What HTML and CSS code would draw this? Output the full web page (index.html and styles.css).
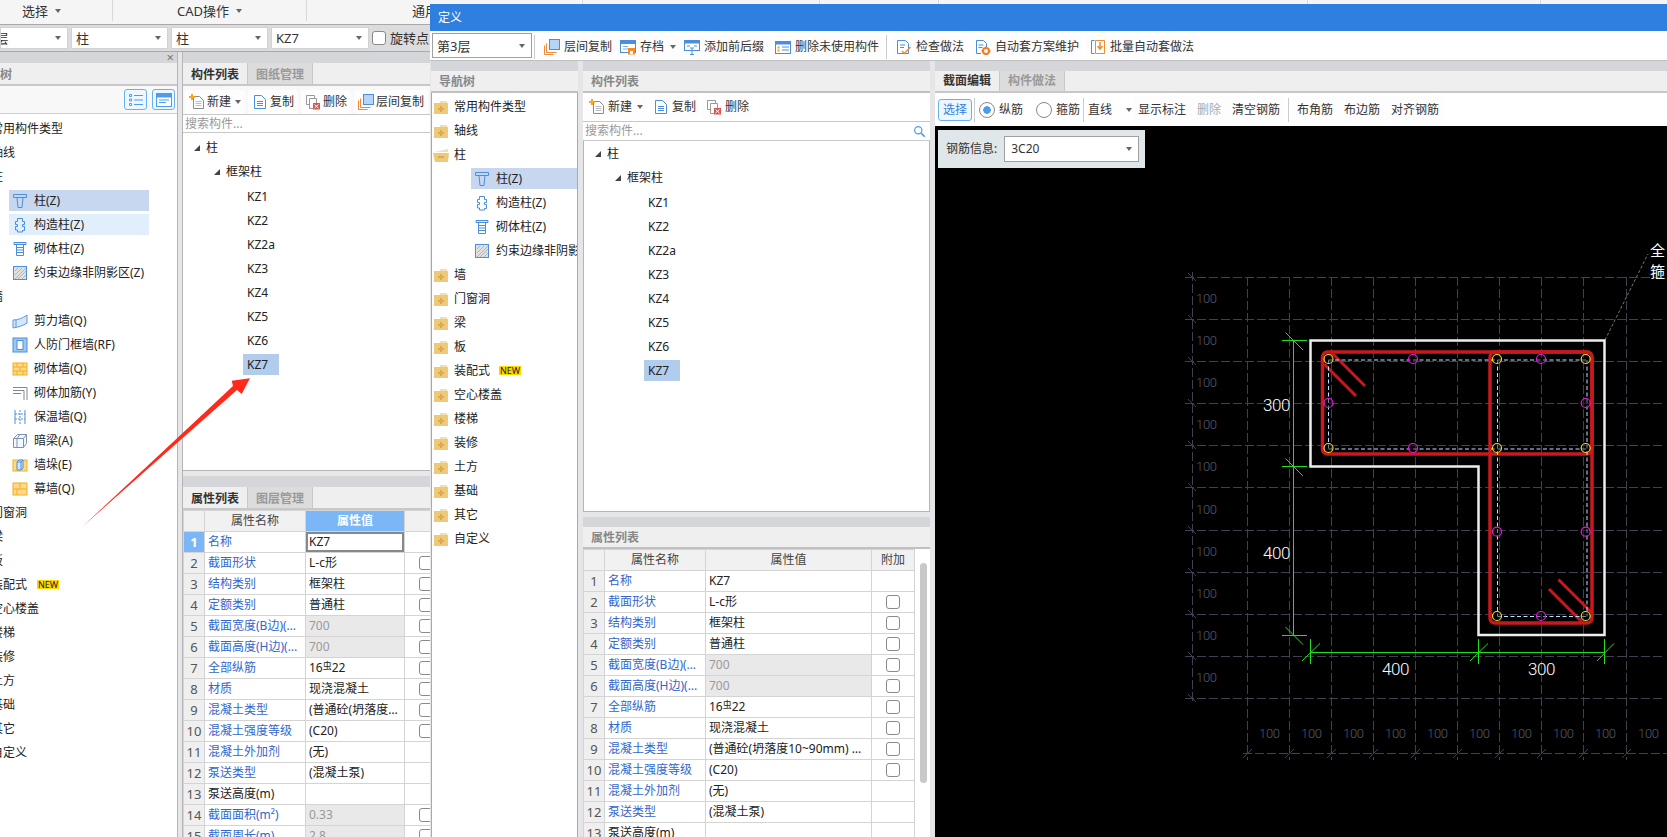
FILE: index.html
```html
<!DOCTYPE html>
<html lang="zh-CN">
<head>
    <meta charset="UTF-8">
    <title>定义</title>
    <link rel="stylesheet" href="styles.css">
</head>
<body>
    <svg class="sprite" xmlns="http://www.w3.org/2000/svg">
        <symbol id="i-folder" viewBox="0 0 16 16">
            <path d="M7 2h7v2H7z" fill="#f6dfae"/>
            <path d="M1 4h14v11H1z" fill="#efc97a"/>
            <path d="M7 7h2v2h2v2H9v2H7v-2H5V9h2z" fill="#dca94e"/>
        </symbol>
        <symbol id="i-folder-open" viewBox="0 0 16 16">
            <path d="M1 5l5-1 9-2v3H6z" fill="#f6dfae"/>
            <path d="M0 6h16l-1 9H2z" fill="#efc97a"/>
            <path d="M5 9h6v2H5z" fill="#dca94e"/>
        </symbol>
        <symbol id="i-col" viewBox="0 0 16 16">
            <path d="M1.500 1.500h13v3h-13zM5 4.500l1 10h4l1-10" fill="none" stroke="#4a8fdc"/>
        </symbol>
        <symbol id="i-gz" viewBox="0 0 16 16">
            <path d="M5.500 1.500h5v3h2v3h-2v2h2v4h-2v1.500h-5V13h-2V9.500h2v-2h-2v-3h2z" fill="none" stroke="#4a8fdc"/>
        </symbol>
        <symbol id="i-qz" viewBox="0 0 16 16">
            <path d="M2 1.500h12v2H2z" fill="#d4e6fa" stroke="#4a8fdc"/>
            <path d="M4.500 3.500h7v11h-7zM4.500 6.500h7M4.500 9h7M4.500 11.500h7" fill="none" stroke="#4a8fdc"/>
        </symbol>
        <symbol id="i-hatch" viewBox="0 0 16 16">
            <rect x="1.500" y="1.500" width="13" height="13" fill="#e0e0e0" stroke="#4a8fdc"/>
            <path d="M3 6l3-3M3 10l7-7M3 14L14 3M6 14l8-8M10 14l4-4" stroke="#b5b5b5"/>
        </symbol>
        <symbol id="i-shear" viewBox="0 0 16 16">
            <path d="M1 7c5 0 10-2 14-5v8c-4 3-9 4-14 5z" fill="#d4e6fa" stroke="#5b9be0"/>
            <path d="M4 7v8" stroke="#5b9be0"/>
        </symbol>
        <symbol id="i-rf" viewBox="0 0 16 16">
            <rect x="1" y="1" width="14" height="14" fill="#9fc7f2" stroke="#4a8fdc"/>
            <rect x="5" y="3.500" width="6" height="9" fill="#fff" stroke="#4a8fdc"/>
        </symbol>
        <symbol id="i-brick" viewBox="0 0 16 16">
            <rect x="1" y="2" width="14" height="12" fill="#ffd98a" stroke="#f3ae1d"/>
            <path d="M1 6h14M1 10h14M5 2v4M11 2v4M8 6v4M5 10v4M11 10v4" stroke="#f3ae1d"/>
        </symbol>
        <symbol id="i-rebar" viewBox="0 0 16 16">
            <path d="M1 2.500h14V15M1 5.500h11V15M1 8.500h8" fill="none" stroke="#7f8a96"/>
        </symbol>
        <symbol id="i-warm" viewBox="0 0 16 16">
            <path d="M3 1v14M13 1v14" stroke="#4a8fdc"/>
            <path d="M8 1v14M3 5h10M3 10h10" stroke="#4a8fdc" stroke-dasharray="2 1"/>
        </symbol>
        <symbol id="i-beam" viewBox="0 0 16 16">
            <path d="M1.500 5.500l4-4h9v9l-3 4h-10zM1.500 5.500h10v9M11.500 5.500l3-4M5 5.500v9M8 1.500L5 5.500" fill="#f4f8fd" stroke="#7d93ad"/>
        </symbol>
        <symbol id="i-pier" viewBox="0 0 16 16">
            <rect x="1" y="3" width="14" height="11" fill="#ffd98a" stroke="#f3ae1d"/>
            <path d="M5 5l2-2h4v8l-2 2H5zM5 5h4v8M9 5l2-2" fill="#d4e6fa" stroke="#4a8fdc"/>
        </symbol>
        <symbol id="i-curtain" viewBox="0 0 16 16">
            <rect x="1" y="2" width="14" height="12" fill="#ffd98a" stroke="#f3ae1d"/>
            <path d="M1 8h14M8 2v6M5 8v6" stroke="#f3ae1d"/>
        </symbol>
        <symbol id="i-new" viewBox="0 0 16 16">
            <path d="M4.500 2.500h6l4 4v8h-10z" fill="#fff" stroke="#8b8b8b"/>
            <path d="M6.500 7.500h6M6.500 9.500h6M6.500 11.500h6" stroke="#bbb"/>
            <path d="M0 2h2V0h2v2h2v2H4v2H2V4H0z" fill="#f5a623"/>
        </symbol>
        <symbol id="i-copy" viewBox="0 0 16 16">
            <path d="M2.500 1.500h7l4 4v9h-11z" fill="#fff" stroke="#4a8fdc"/>
            <path d="M5 7.500h6M5 9.500h6M5 11.500h6" stroke="#4a8fdc"/>
        </symbol>
        <symbol id="i-del" viewBox="0 0 16 16">
            <path d="M1.500 1.500h8v9h-8z" fill="#fff" stroke="#999"/>
            <path d="M4.500 4.500h7v10h-7z" fill="#fff" stroke="#999"/>
            <rect x="8" y="9" width="7" height="6.500" fill="#e0524a"/>
            <path d="M9.500 10.500l4 3.500M13.500 10.500l-4 3.500" stroke="#fff"/>
        </symbol>
        <symbol id="i-floor" viewBox="0 0 16 16">
            <path d="M.5 15.500V6.500M.5 15.500h9M2.500 13.500V4.500M2.500 13.500h10" fill="none" stroke="#ee8a3a"/>
            <rect x="5.500" y=".5" width="10" height="10" fill="#b7d5f7" stroke="#4a8fdc"/>
        </symbol>
        <symbol id="i-save" viewBox="0 0 16 16">
            <rect x=".5" y="1.500" width="15" height="12" fill="#fff" stroke="#4a8fdc"/>
            <path d="M1 2h14v3H1z" fill="#4a8fdc"/>
            <path d="M3 7.500h5M3 10h5" stroke="#7fb0e8"/>
            <rect x="8" y="9" width="7" height="6.500" fill="#ef8c2e"/>
            <rect x="10" y="12" width="3" height="3" fill="#fff"/>
        </symbol>
        <symbol id="i-prefix" viewBox="0 0 16 16">
            <rect x=".5" y="1.500" width="15" height="10" fill="#fff" stroke="#4a8fdc"/>
            <path d="M1 2h14v2.500H1z" fill="#4a8fdc"/>
            <path d="M3 7h3M10 7h3" stroke="#4a8fdc"/>
            <path d="M6 9h4M8 9v6M6 15.500h4" stroke="#4a8fdc"/>
        </symbol>
        <symbol id="i-unused" viewBox="0 0 16 16">
            <rect x=".5" y="2.500" width="15" height="12" fill="#fff" stroke="#4a8fdc"/>
            <path d="M1 3h14v2.500H1z" fill="#4a8fdc"/>
            <path d="M7 8h7M7 11h7" stroke="#4a8fdc"/>
            <path d="M2.500 7.500h2v2h-2zM2.500 10.500h2v2h-2z" fill="#f0a030"/>
        </symbol>
        <symbol id="i-check" viewBox="0 0 16 16">
            <path d="M1.500 1.500h8l3 3v10h-11z" fill="#fff" stroke="#4a8fdc"/>
            <path d="M4 6h5M4 8.500h4" stroke="#4a8fdc"/>
            <path d="M6 12l2.500 2.500L14.500 8" fill="none" stroke="#ef8c2e" stroke-width="1.500"/>
        </symbol>
        <symbol id="i-auto" viewBox="0 0 16 16">
            <path d="M1.500 1.500h7l3 3v5M6 14.500H1.500v-13" fill="#fff" stroke="#4a8fdc"/>
            <path d="M3.500 6h5M3.500 8.500h4" stroke="#4a8fdc"/>
            <circle cx="11" cy="12" r="3" fill="none" stroke="#ef7d22" stroke-width="2"/>
            <path d="M11 7.500v2M11 14.500v1.500M6.500 12h2M13.500 12h2" stroke="#ef7d22" stroke-width="1.500"/>
        </symbol>
        <symbol id="i-batch" viewBox="0 0 16 16">
            <path d="M4.500 1.500h-3v13h3" fill="none" stroke="#4a8fdc"/>
            <path d="M5.500 1.500h9v13h-9z" fill="#fff" stroke="#ef8c2e"/>
            <path d="M10 3v6M7.500 7l2.500 3 2.500-3" fill="none" stroke="#ef8c2e" stroke-width="1.500"/>
        </symbol>
        <symbol id="i-list" viewBox="0 0 16 16">
            <path d="M1.500 2.500h2v2h-2zM1.500 7h2v2h-2zM1.500 11.500h2v2h-2z" fill="#fff" stroke="#4a9cf0"/>
            <path d="M6 3.500h9M6 8h9M6 12.500h9" stroke="#4a9cf0"/>
        </symbol>
        <symbol id="i-card" viewBox="0 0 16 16">
            <rect x=".5" y="1.500" width="15" height="13" fill="#fff" stroke="#4a9cf0"/>
            <path d="M1 2h14v3.500H1z" fill="#4a9cf0"/>
            <path d="M3 8h10M3 10.500h7" stroke="#4a9cf0"/>
        </symbol>
        <symbol id="i-search" viewBox="0 0 16 16">
            <circle cx="6.500" cy="6.500" r="4.500" fill="none" stroke="#4a9cf0" stroke-width="1.500"/>
            <path d="M10 10l4.500 4.500" stroke="#4a9cf0" stroke-width="2"/>
        </symbol>
    </svg>

    <div class="app">
        <div class="ribbon">
            <div class="ribbon-group first">选择<i class="caret"></i></div>
            <div class="ribbon-group w194">CAD操作<i class="caret"></i></div>
            <div class="ribbon-group w276">通用操作<i class="caret"></i></div>
            <div class="ribbon-group w237"></div>
            <div class="ribbon-group w119"></div>
            <div class="ribbon-group w369"></div>
            <div class="ribbon-group w233"></div>
        </div>
        <div class="filterbar">
            <div class="combo first"><span class="cut">第3层</span><i class="caret"></i></div>
            <div class="combo"><span>柱</span><i class="caret"></i></div>
            <div class="combo"><span>柱</span><i class="caret"></i></div>
            <div class="combo wide"><span>KZ7</span><i class="caret"></i></div>
            <span class="chk"></span>
            <span>旋转点角度</span>
        </div>

        <div class="app-main">
            <div class="nav-pane">
                <div class="strip close-strip"><span class="close">×</span></div>
                <div class="pane-head"><span class="cut-title">导航树</span></div>
                <div class="view-bar">
                    <span class="view-btn"><svg class="ic"><use href="#i-list"/></svg></span>
                    <span class="view-btn"><svg class="ic"><use href="#i-card"/></svg></span>
                </div>
                <div class="nav-tree">
                    <div class="node top">常用构件类型</div>
                    <div class="node top">轴线</div>
                    <div class="node top">柱</div>
                    <div class="node sub sel"><svg class="ic"><use href="#i-col"/></svg>柱(Z)</div>
                    <div class="node sub hover"><svg class="ic"><use href="#i-gz"/></svg>构造柱(Z)</div>
                    <div class="node sub"><svg class="ic"><use href="#i-qz"/></svg>砌体柱(Z)</div>
                    <div class="node sub"><svg class="ic"><use href="#i-hatch"/></svg>约束边缘非阴影区(Z)</div>
                    <div class="node top">墙</div>
                    <div class="node sub"><svg class="ic"><use href="#i-shear"/></svg>剪力墙(Q)</div>
                    <div class="node sub"><svg class="ic"><use href="#i-rf"/></svg>人防门框墙(RF)</div>
                    <div class="node sub"><svg class="ic"><use href="#i-brick"/></svg>砌体墙(Q)</div>
                    <div class="node sub"><svg class="ic"><use href="#i-rebar"/></svg>砌体加筋(Y)</div>
                    <div class="node sub"><svg class="ic"><use href="#i-warm"/></svg>保温墙(Q)</div>
                    <div class="node sub"><svg class="ic"><use href="#i-beam"/></svg>暗梁(A)</div>
                    <div class="node sub"><svg class="ic"><use href="#i-pier"/></svg>墙垛(E)</div>
                    <div class="node sub"><svg class="ic"><use href="#i-curtain"/></svg>幕墙(Q)</div>
                    <div class="node top">门窗洞</div>
                    <div class="node top">梁</div>
                    <div class="node top">板</div>
                    <div class="node top">装配式<b class="new">NEW</b></div>
                    <div class="node top">空心楼盖</div>
                    <div class="node top">楼梯</div>
                    <div class="node top">装修</div>
                    <div class="node top">土方</div>
                    <div class="node top">基础</div>
                    <div class="node top">其它</div>
                    <div class="node top">自定义</div>
                </div>
            </div>

            <div class="list-pane">
                <div class="strip"></div>
                <div class="tabs">
                    <span class="tab on">构件列表</span>
                    <span class="tab">图纸管理</span>
                </div>
                <div class="toolbar tight">
                    <span class="tbtn"><svg class="ic"><use href="#i-new"/></svg>新建<i class="caret"></i></span>
                    <span class="tbtn"><svg class="ic"><use href="#i-copy"/></svg>复制</span>
                    <span class="tbtn"><svg class="ic"><use href="#i-del"/></svg>删除</span>
                    <span class="tbtn"><svg class="ic"><use href="#i-floor"/></svg>层间复制</span>
                </div>
                <div class="search">搜索构件...</div>
                <div class="list-tree">
                    <div class="lnode l1"><i class="fold"></i>柱</div>
                    <div class="lnode l2"><i class="fold"></i>框架柱</div>
                    <div class="lnode l3"><span>KZ1</span></div>
                    <div class="lnode l3"><span>KZ2</span></div>
                    <div class="lnode l3"><span>KZ2a</span></div>
                    <div class="lnode l3"><span>KZ3</span></div>
                    <div class="lnode l3"><span>KZ4</span></div>
                    <div class="lnode l3"><span>KZ5</span></div>
                    <div class="lnode l3"><span>KZ6</span></div>
                    <div class="lnode l3"><span class="picked">KZ7</span></div>
                </div>
                <div class="pane-gap"></div>
                <div class="strip"></div>
                <div class="tabs">
                    <span class="tab on">属性列表</span>
                    <span class="tab">图层管理</span>
                </div>
                <table class="props back">
                    <colgroup><col class="c-no"><col class="c-name"><col class="c-val"><col class="c-add"></colgroup>
                    <tr><th></th><th>属性名称</th><th class="active">属性值</th><th>附加</th></tr>
                    <tr><td class="no cur">1</td><td class="nm">名称</td><td class="edit">KZ7</td><td></td></tr>
                    <tr><td class="no">2</td><td class="nm">截面形状</td><td>L-c形</td><td class="add"><span class="chk"></span></td></tr>
                    <tr><td class="no">3</td><td class="nm">结构类别</td><td>框架柱</td><td class="add"><span class="chk"></span></td></tr>
                    <tr><td class="no">4</td><td class="nm">定额类别</td><td>普通柱</td><td class="add"><span class="chk"></span></td></tr>
                    <tr><td class="no">5</td><td class="nm">截面宽度(B边)(mm)</td><td class="off">700</td><td class="add"><span class="chk"></span></td></tr>
                    <tr><td class="no">6</td><td class="nm">截面高度(H边)(mm)</td><td class="off">700</td><td class="add"><span class="chk"></span></td></tr>
                    <tr><td class="no">7</td><td class="nm">全部纵筋</td><td>16<span class="steel">虫</span>22</td><td class="add"><span class="chk"></span></td></tr>
                    <tr><td class="no">8</td><td class="nm">材质</td><td>现浇混凝土</td><td class="add"><span class="chk"></span></td></tr>
                    <tr><td class="no">9</td><td class="nm">混凝土类型</td><td>(普通砼(坍落度10~90mm)</td><td class="add"><span class="chk"></span></td></tr>
                    <tr><td class="no">10</td><td class="nm">混凝土强度等级</td><td>(C20)</td><td class="add"><span class="chk"></span></td></tr>
                    <tr><td class="no">11</td><td class="nm">混凝土外加剂</td><td>(无)</td><td></td></tr>
                    <tr><td class="no">12</td><td class="nm">泵送类型</td><td>(混凝土泵)</td><td></td></tr>
                    <tr><td class="no">13</td><td class="plain">泵送高度(m)</td><td></td><td></td></tr>
                    <tr><td class="no">14</td><td class="nm">截面面积(m²)</td><td class="off">0.33</td><td class="add"><span class="chk"></span></td></tr>
                    <tr><td class="no">15</td><td class="nm">截面周长(m)</td><td class="off">2.8</td><td class="add"><span class="chk"></span></td></tr>
                </table>
            </div>
        </div>

        <svg class="pointer" width="180" height="160" viewBox="75 375 180 160" xmlns="http://www.w3.org/2000/svg">
            <polygon points="82,527 233,386 231.700,380.700 250,378.300 241.700,394 237,390" fill="#ff2a1a"/>
        </svg>
    </div>

    <div class="dialog">
        <div class="dlg-title">定义</div>
        <div class="dlg-tool">
            <div class="combo floor"><span>第3层</span><i class="caret"></i></div>
            <i class="sep"></i>
            <span class="tbtn nogap"><svg class="ic"><use href="#i-floor"/></svg>层间复制</span>
            <span class="tbtn nogap"><svg class="ic"><use href="#i-save"/></svg>存档<i class="caret"></i></span>
            <span class="tbtn"><svg class="ic"><use href="#i-prefix"/></svg>添加前后缀</span>
            <span class="tbtn"><svg class="ic"><use href="#i-unused"/></svg>删除未使用构件</span>
            <i class="sep"></i>
            <span class="tbtn"><svg class="ic"><use href="#i-check"/></svg>检查做法</span>
            <span class="tbtn"><svg class="ic"><use href="#i-auto"/></svg>自动套方案维护</span>
            <span class="tbtn"><svg class="ic"><use href="#i-batch"/></svg>批量自动套做法</span>
        </div>

        <div class="dlg-body">
            <div class="dcol nav-col">
                <div class="strip"></div>
                <div class="col-head">导航树</div>
                <div class="dlg-tree">
                    <div class="node"><svg class="ic"><use href="#i-folder"/></svg>常用构件类型</div>
                    <div class="node"><svg class="ic"><use href="#i-folder"/></svg>轴线</div>
                    <div class="node"><svg class="ic"><use href="#i-folder-open"/></svg>柱</div>
                    <div class="node sub sel"><svg class="ic"><use href="#i-col"/></svg>柱(Z)</div>
                    <div class="node sub"><svg class="ic"><use href="#i-gz"/></svg>构造柱(Z)</div>
                    <div class="node sub"><svg class="ic"><use href="#i-qz"/></svg>砌体柱(Z)</div>
                    <div class="node sub"><svg class="ic"><use href="#i-hatch"/></svg>约束边缘非阴影区(Z)</div>
                    <div class="node"><svg class="ic"><use href="#i-folder"/></svg>墙</div>
                    <div class="node"><svg class="ic"><use href="#i-folder"/></svg>门窗洞</div>
                    <div class="node"><svg class="ic"><use href="#i-folder"/></svg>梁</div>
                    <div class="node"><svg class="ic"><use href="#i-folder"/></svg>板</div>
                    <div class="node"><svg class="ic"><use href="#i-folder"/></svg>装配式<b class="new">NEW</b></div>
                    <div class="node"><svg class="ic"><use href="#i-folder"/></svg>空心楼盖</div>
                    <div class="node"><svg class="ic"><use href="#i-folder"/></svg>楼梯</div>
                    <div class="node"><svg class="ic"><use href="#i-folder"/></svg>装修</div>
                    <div class="node"><svg class="ic"><use href="#i-folder"/></svg>土方</div>
                    <div class="node"><svg class="ic"><use href="#i-folder"/></svg>基础</div>
                    <div class="node"><svg class="ic"><use href="#i-folder"/></svg>其它</div>
                    <div class="node"><svg class="ic"><use href="#i-folder"/></svg>自定义</div>
                </div>
            </div>

            <div class="dcol mid-col">
                <div class="strip"></div>
                <div class="col-head">构件列表</div>
                <div class="toolbar">
                    <span class="tbtn"><svg class="ic"><use href="#i-new"/></svg>新建<i class="caret"></i></span>
                    <span class="tbtn"><svg class="ic"><use href="#i-copy"/></svg>复制</span>
                    <span class="tbtn"><svg class="ic"><use href="#i-del"/></svg>删除</span>
                </div>
                <div class="search">搜索构件...<svg class="ic glass"><use href="#i-search"/></svg></div>
                <div class="list-tree tall">
                    <div class="lnode l1"><i class="fold"></i>柱</div>
                    <div class="lnode l2"><i class="fold"></i>框架柱</div>
                    <div class="lnode l3"><span>KZ1</span></div>
                    <div class="lnode l3"><span>KZ2</span></div>
                    <div class="lnode l3"><span>KZ2a</span></div>
                    <div class="lnode l3"><span>KZ3</span></div>
                    <div class="lnode l3"><span>KZ4</span></div>
                    <div class="lnode l3"><span>KZ5</span></div>
                    <div class="lnode l3"><span>KZ6</span></div>
                    <div class="lnode l3"><span class="picked">KZ7</span></div>
                </div>
                <div class="pane-gap"></div>
                <div class="strip"></div>
                <div class="col-head">属性列表</div>
                <div class="prop-wrap">
                    <table class="props front">
                        <colgroup><col class="c-no"><col class="c-name"><col class="c-val2"><col class="c-add2"></colgroup>
                        <tr><th></th><th>属性名称</th><th>属性值</th><th>附加</th></tr>
                        <tr><td class="no">1</td><td class="nm">名称</td><td>KZ7</td><td></td></tr>
                        <tr><td class="no">2</td><td class="nm">截面形状</td><td>L-c形</td><td class="add"><span class="chk"></span></td></tr>
                        <tr><td class="no">3</td><td class="nm">结构类别</td><td>框架柱</td><td class="add"><span class="chk"></span></td></tr>
                        <tr><td class="no">4</td><td class="nm">定额类别</td><td>普通柱</td><td class="add"><span class="chk"></span></td></tr>
                        <tr><td class="no">5</td><td class="nm">截面宽度(B边)(mm)</td><td class="off">700</td><td class="add"><span class="chk"></span></td></tr>
                        <tr><td class="no">6</td><td class="nm">截面高度(H边)(mm)</td><td class="off">700</td><td class="add"><span class="chk"></span></td></tr>
                        <tr><td class="no">7</td><td class="nm">全部纵筋</td><td>16<span class="steel">虫</span>22</td><td class="add"><span class="chk"></span></td></tr>
                        <tr><td class="no">8</td><td class="nm">材质</td><td>现浇混凝土</td><td class="add"><span class="chk"></span></td></tr>
                        <tr><td class="no">9</td><td class="nm">混凝土类型</td><td>(普通砼(坍落度10~90mm) 碎石</td><td class="add"><span class="chk"></span></td></tr>
                        <tr><td class="no">10</td><td class="nm">混凝土强度等级</td><td>(C20)</td><td class="add"><span class="chk"></span></td></tr>
                        <tr><td class="no">11</td><td class="nm">混凝土外加剂</td><td>(无)</td><td></td></tr>
                        <tr><td class="no">12</td><td class="nm">泵送类型</td><td>(混凝土泵)</td><td></td></tr>
                        <tr><td class="no">13</td><td class="plain">泵送高度(m)</td><td></td><td></td></tr>
                    </table>
                    <div class="scroll"><div class="thumb"></div></div>
                </div>
            </div>

            <div class="dcol edit-col">
                <div class="strip"></div>
                <div class="tabs">
                    <span class="tab on">截面编辑</span>
                    <span class="tab">构件做法</span>
                </div>
                <div class="edit-bar">
                    <span class="ebtn picked-btn">选择</span>
                    <i class="sep"></i>
                    <label class="radio on">纵筋</label>
                    <label class="radio second">箍筋</label>
                    <i class="sep"></i>
                    <span class="line-kind">直线</span><i class="caret"></i>
                    <span class="ebtn">显示标注</span>
                    <span class="ebtn dim-btn">删除</span>
                    <span class="ebtn">清空钢筋</span>
                    <i class="sep last"></i>
                    <span class="ebtn">布角筋</span>
                    <span class="ebtn">布边筋</span>
                    <span class="ebtn">对齐钢筋</span>
                </div>
                <div class="canvas">
                    <div class="rebar-info">
                        <span>钢筋信息:</span>
                        <div class="combo info"><span>3C20</span><i class="caret"></i></div>
                    </div>
                    <svg class="drawing" viewBox="935 126 732 711" xmlns="http://www.w3.org/2000/svg">
                        <path class="grid" d="M1185 277.500H1664M1185 319.500H1664M1185 361.500H1664M1185 403.500H1664M1185 445.500H1664M1185 487.500H1664M1185 530.500H1664M1185 572.500H1664M1185 614.500H1664M1185 656.500H1664M1185 698.500H1664M1243 753.500H1667M1192.500 272V702M1247.500 277V760M1289.500 277V760M1331.500 277V760M1373.500 277V760M1415.500 277V760M1457.500 277V760M1499.500 277V760M1541.500 277V760M1583.500 277V760M1626.500 277V760"/>
                        <path class="ticks" d="M1188 273l8 8M1188 315l8 8M1188 357l8 8M1188 399l8 8M1188 441l8 8M1188 483l8 8M1188 526l8 8M1188 568l8 8M1188 610l8 8M1188 652l8 8M1188 694l8 8M1243 758l9-9M1285 758l9-9M1327 758l9-9M1369 758l9-9M1411 758l9-9M1453 758l9-9M1495 758l9-9M1537 758l9-9M1579 758l9-9M1622 758l9-9"/>
                        <g class="grid-labels">
                            <text x="1196" y="303">100</text><text x="1196" y="345">100</text><text x="1196" y="387">100</text><text x="1196" y="429">100</text><text x="1196" y="471">100</text><text x="1196" y="514">100</text><text x="1196" y="556">100</text><text x="1196" y="598">100</text><text x="1196" y="640">100</text><text x="1196" y="682">100</text>
                            <text x="1259" y="738">100</text><text x="1301" y="738">100</text><text x="1343" y="738">100</text><text x="1385" y="738">100</text><text x="1427" y="738">100</text><text x="1469" y="738">100</text><text x="1511" y="738">100</text><text x="1553" y="738">100</text><text x="1595" y="738">100</text><text x="1638" y="738">100</text>
                        </g>
                        <path class="leader" d="M1605 340L1648 254"/>
                        <path class="outline" d="M1310.500 340.500H1604.500V635H1478.500V466.500H1310.500Z"/>
                        <rect class="hoop" x="1322.500" y="352" width="269.500" height="102" rx="5"/>
                        <rect class="hoop" x="1490" y="352" width="102" height="271" rx="5"/>
                        <path class="hook" d="M1332.500 353.500L1365 386M1324 364L1356 396M1558.500 579.500L1591 612M1549 589L1582 622"/>
                        <path class="inner" d="M1328.500 360H1587M1328.500 360V449M1328.500 449H1587M1497.500 360V616.500M1587 360V616.500M1497.500 616.500H1587"/>
                        <g class="bar-corner">
                            <circle cx="1328.500" cy="359" r="4.500"/><circle cx="1497" cy="359" r="4.500"/><circle cx="1585.700" cy="359" r="4.500"/>
                            <circle cx="1328.500" cy="448" r="4.500"/><circle cx="1497" cy="448" r="4.500"/><circle cx="1585.700" cy="448" r="4.500"/>
                            <circle cx="1497" cy="616" r="4.500"/><circle cx="1585.700" cy="616" r="4.500"/>
                        </g>
                        <g class="bar-side">
                            <circle cx="1413" cy="359" r="4.500"/><circle cx="1541" cy="359" r="4.500"/>
                            <circle cx="1328.500" cy="403" r="4.500"/><circle cx="1585.700" cy="403" r="4.500"/>
                            <circle cx="1413" cy="448" r="4.500"/>
                            <circle cx="1497" cy="531.700" r="4.500"/><circle cx="1585.700" cy="531.700" r="4.500"/>
                            <circle cx="1541" cy="616" r="4.500"/>
                        </g>
                        <path class="dim" d="M1293.500 340V635M1282 340.500H1307M1282 466.500H1307M1282 635.500H1307M1285.500 332.500L1303 350M1285.500 458.500L1303 476M1285.500 627L1303 644.500M1310.500 652.500H1604.500M1310.500 639V664M1478.500 639V664M1604.500 639V664M1302 661L1320 643.500M1470 661L1488 643.500M1597 661L1614 643.500"/>
                        <g class="dim-labels">
                            <text x="1263" y="411">300</text>
                            <text x="1263" y="559">400</text>
                            <text x="1382" y="675">400</text>
                            <text x="1528" y="675">300</text>
                        </g>
                        <g class="note">
                            <text x="1650" y="256">全</text>
                            <text x="1650" y="277">箍</text>
                        </g>
                    </svg>
                </div>
            </div>
        </div>
    </div>
</body>
</html>
```

FILE: styles.css
```css
* {
    margin: 0;
    padding: 0;
    box-sizing: border-box;
}

body {
    width: 1667px;
    height: 837px;
    overflow: hidden;
    position: relative;
    font-family: "Noto Sans", "Noto Sans CJK SC", sans-serif;
    font-size: 12px;
    line-height: 16px;
    color: #333;
    background: #e6e6e8;
}

.sprite {
    display: none;
}

i {
    font-style: normal;
}

.ic {
    width: 16px;
    height: 16px;
    flex: none;
}

.caret {
    display: inline-block;
    width: 0;
    height: 0;
    flex: none;
    border-left: 3px solid transparent;
    border-right: 3px solid transparent;
    border-top: 4px solid #666;
}

.sep {
    display: block;
    width: 1px;
    height: 24px;
    flex: none;
    background: #ccc;
}

.strip {
    height: 11px;
    flex: none;
    background: #d4d6da;
}

.chk {
    display: inline-block;
    width: 14px;
    height: 14px;
    flex: none;
    background: #fff;
    border: 1px solid #8a8a8a;
    border-radius: 3px;
}

/* background window */
.app {
    width: 100%;
    height: 837px;
    display: flex;
    flex-direction: column;
    overflow: hidden;
}

.ribbon {
    height: 25px;
    flex: none;
    display: flex;
    background: #f5f5f5;
    border-bottom: 1px solid #a9a9a9;
    font-size: 13px;
}

.ribbon-group {
    height: 21px;
    display: flex;
    align-items: center;
    justify-content: center;
    gap: 7px;
    border-right: 1px solid #d8d8d8;
}

.ribbon-group.first { width: 113px; justify-content: flex-start; padding-left: 22px; }
.w194 { width: 194px; }
.w276 { width: 276px; }
.w237 { width: 237px; }
.w119 { width: 119px; }
.w369 { width: 369px; }
.w233 { width: 233px; }

.filterbar {
    height: 27px;
    flex: none;
    display: flex;
    align-items: center;
    gap: 3px;
    background: #dcdcde;
    border-bottom: 1px solid #a9a9a9;
    font-size: 13px;
    white-space: nowrap;
}

.filterbar .chk {
    margin-right: 1px;
}

.combo {
    width: 97px;
    height: 22px;
    flex: none;
    display: flex;
    align-items: center;
    justify-content: space-between;
    padding: 0 6px 0 4px;
    background: #fff;
    border: 1px solid #d2d2d2;
    overflow: hidden;
}

.combo.first { width: 68px; padding-left: 0; }
.combo.wide { width: 98px; }
.cut { margin-left: -26px; }

.app-main {
    flex: 1;
    min-height: 0;
    display: flex;
}

.nav-pane {
    width: 178px;
    flex: none;
    display: flex;
    flex-direction: column;
    background: #fff;
    border-right: 1px solid #b5b5b5;
}

.close-strip {
    display: flex;
    justify-content: flex-end;
    padding-right: 3px;
    line-height: 11px;
    font-size: 13px;
    color: #777;
}

.pane-head {
    height: 23px;
    flex: none;
    display: flex;
    align-items: center;
    padding-top: 3px;
    background: #efefef;
    border-bottom: 2px solid #c8c8c8;
    color: #888;
    font-weight: 700;
}

.cut-title {
    margin-left: -24px;
}

.view-bar {
    height: 28px;
    flex: none;
    display: flex;
    align-items: center;
    justify-content: flex-end;
    gap: 5px;
    padding-right: 2px;
    background: #f8f8f8;
    border-bottom: 1px solid #cfcfcf;
}

.view-btn {
    width: 23px;
    height: 21px;
    display: flex;
    align-items: center;
    justify-content: center;
    background: #eef6ff;
    border: 1px solid #6ab0f0;
    border-radius: 3px;
}

.nav-tree,
.dlg-tree {
    flex: 1;
    min-height: 0;
    display: flex;
    flex-direction: column;
    padding-top: 3px;
    overflow: hidden;
}

.node {
    height: 21px;
    flex: none;
    margin: 1px 0 2px;
    display: flex;
    align-items: center;
    gap: 6px;
    color: #222;
    white-space: nowrap;
    overflow: hidden;
}

.node.top {
    margin-left: -9px;
}

.node.sub {
    width: 140px;
    margin-left: 9px;
    padding-left: 3px;
}

.node.sel {
    background: #c6d7ef;
}

.node.hover {
    background: #e1effc;
}

.new {
    margin-left: 4px;
    height: 9px;
    padding: 0 1px;
    background: #ffd800;
    font-size: 9px;
    line-height: 9px;
    font-weight: 400;
    color: #222;
}

.list-pane {
    width: 300px;
    margin-left: 4px;
    flex: none;
    display: flex;
    flex-direction: column;
    background: #e8e8e8;
    border-left: 1px solid #b5b5b5;
}

.tabs {
    height: 23px;
    flex: none;
    display: flex;
    background: #efefef;
    border-bottom: 2px solid #c8c8c8;
}

.tab {
    width: 65px;
    display: flex;
    align-items: center;
    justify-content: center;
    font-weight: 700;
    color: #999;
    background: #dcdcdc;
    border-right: 1px solid #c8c8c8;
}

.list-pane .tab {
    padding-top: 3px;
}

.tab.on {
    color: #333;
    background: #efefef;
}

.toolbar {
    height: 28px;
    flex: none;
    display: flex;
    align-items: center;
    padding-left: 2px;
    background: #f8f8f8;
}

.list-pane .toolbar {
    padding-top: 3px;
}

.tbtn {
    height: 24px;
    flex: none;
    display: flex;
    align-items: center;
    gap: 4px;
    padding: 0 4px;
    margin-right: 3px;
    color: #333;
    background: #fdfdfd;
    border-radius: 3px;
    white-space: nowrap;
}

.toolbar.tight .tbtn {
    gap: 2px;
}

.mid-col .toolbar .tbtn {
    gap: 3px;
    margin-right: 2px;
}

.tbtn .caret {
    margin-left: 2px;
}

.tbtn.nogap {
    margin-right: 0;
}

.search {
    height: 19px;
    flex: none;
    display: flex;
    align-items: center;
    justify-content: space-between;
    padding: 0 4px 0 2px;
    background: #fff;
    color: #999;
    border-top: 1px solid #c8c8c8;
    border-bottom: 1px solid #c8c8c8;
}

.mid-col .search {
    height: 20px;
}

.glass {
    width: 13px;
    height: 13px;
}

.list-tree {
    height: 338px;
    flex: none;
    padding-top: 3px;
    background: #fff;
    border-bottom: 1px solid #b5b5b5;
    overflow: hidden;
}

.list-tree.tall {
    height: 371px;
    padding-top: 1px;
}

.lnode {
    height: 24px;
    display: flex;
    align-items: center;
    color: #222;
}

.fold {
    width: 0;
    height: 0;
    margin-right: 6px;
    border-style: solid;
    border-width: 0 0 6px 6px;
    border-color: transparent transparent #444 transparent;
}

.l1 { padding-left: 11px; }
.l2 { padding-left: 31px; }
.l3 { padding-left: 60px; }

.lnode span {
    height: 21px;
    width: 36px;
    padding-left: 4px;
    line-height: 21px;
}

.picked {
    background: #b2cced;
}

.pane-gap {
    height: 5px;
    flex: none;
}

/* property tables */
.props {
    table-layout: fixed;
    border-collapse: collapse;
    background: #fff;
    color: #222;
}

.props.back { width: 300px; }
.props.front { width: 331px; }

.c-no { width: 21px; }
.c-name { width: 101px; }
.c-val { width: 99px; }
.c-add { width: 79px; }
.c-val2 { width: 166px; }
.c-add2 { width: 43px; }

.props tr {
    height: 21px;
}

.props th,
.props td {
    height: 21px;
    padding: 0 0 0 3px;
    border: 1px solid #d4d4d4;
    line-height: 18px;
    white-space: nowrap;
    overflow: hidden;
    text-overflow: ellipsis;
}

.props th {
    padding: 0;
    background: #f1f1f1;
    color: #444;
    font-weight: 400;
    text-align: center;
}

.props th.active {
    background: #7bb6f7;
    color: #fff;
    font-weight: 700;
}

.props td.no {
    padding: 0;
    background: #efefef;
    color: #555;
    font-size: 13px;
    text-align: center;
}

.props td.cur {
    background: #7bb6f7;
    color: #fff;
    font-weight: 700;
}

.props td.nm {
    color: #3366cc;
}

.props td.plain {
    color: #222;
}

.props td.off {
    background: #e9e9e9;
    color: #999;
}

.props td.edit {
    box-shadow: inset 0 0 0 2px #888;
}

.props td.add {
    padding: 0;
    text-align: center;
    line-height: 0;
}

.props.back td.add {
    padding-left: 14px;
    text-align: left;
}

.steel {
    font-size: 9px;
    line-height: 9px;
    vertical-align: 3px;
}

/* definition dialog */
.dialog {
    position: absolute;
    left: 430px;
    top: 4px;
    right: 0;
    bottom: 0;
    display: flex;
    flex-direction: column;
    background: #e6e6e8;
}

.dlg-title {
    height: 27px;
    flex: none;
    padding-left: 8px;
    background: #2e7fe0;
    color: #fff;
    line-height: 27px;
}

.dlg-tool {
    height: 30px;
    flex: none;
    display: flex;
    align-items: center;
    padding: 2px 0 0 2px;
    background: #fff;
    border-bottom: 1px solid #c0c0c0;
}

.combo.floor {
    width: 100px;
    height: 25px;
    margin-top: -2px;
    border-color: #a0a0a0;
    font-size: 13px;
}

.dlg-tool .sep {
    margin: 0 5px 0 2px;
}

.dlg-tool .sep:nth-of-type(2) {
    margin: 0 5px 0 0;
}

.dlg-body {
    flex: 1;
    min-height: 0;
    display: flex;
    gap: 5px;
    padding-left: 1px;
}

.dcol {
    display: flex;
    flex-direction: column;
    min-height: 0;
}

.dcol .strip {
    height: 10px;
}

.dcol .tabs {
    height: 22px;
}

.nav-col { width: 147px; flex: none; }
.mid-col { width: 347px; flex: none; }
.edit-col { flex: 1; min-width: 0; }

.col-head {
    height: 22px;
    flex: none;
    padding-left: 8px;
    background: #efefef;
    border-bottom: 2px solid #c0c0c0;
    line-height: 22px;
    color: #888;
    font-weight: 700;
}

.dlg-tree {
    padding-top: 2px;
    background: #fff;
    border-left: 1px solid #aaa;
    border-right: 1px solid #aaa;
}

.dlg-tree .node {
    padding-left: 1px;
    gap: 5px;
}

.dlg-tree .node.sub {
    width: auto;
    margin-left: 39px;
    padding-left: 3px;
    gap: 6px;
}

.mid-col .toolbar {
    background: #fff;
}

.mid-col .list-tree {
    border-left: 1px solid #b5b5b5;
    border-right: 1px solid #b5b5b5;
}

.prop-wrap {
    flex: 1;
    min-height: 0;
    display: flex;
    background: #fff;
    overflow: hidden;
}

.scroll {
    flex: 1;
    padding: 14px 3px 0 5px;
}

.thumb {
    height: 220px;
    background: #c8c8c8;
    border-radius: 4px;
}

.edit-bar {
    height: 33px;
    flex: none;
    display: flex;
    align-items: center;
    padding-left: 3px;
    background: #fff;
}

.ebtn {
    height: 28px;
    flex: none;
    padding: 0 5px;
    margin-right: 1px;
    line-height: 28px;
    background: #fdfdfd;
    border-radius: 3px;
    color: #333;
}

.ebtn.dim-btn {
    color: #aaa;
}

.picked-btn {
    width: 34px;
    height: 22px;
    padding: 0;
    margin-right: 2px;
    text-align: center;
    line-height: 20px;
    color: #2e7fe0;
    background: #eef6ff;
    border: 1px solid #6ab0f0;
}

.edit-bar .sep {
    margin-right: 4px;
}

.edit-bar .sep.last {
    margin: 0 3px 0 2px;
}

.radio {
    display: flex;
    align-items: center;
    gap: 4px;
    flex: none;
    color: #333;
}

.radio::before {
    content: "";
    width: 14px;
    height: 14px;
    border: 1px solid #888;
    border-radius: 50%;
    background: #fff;
}

.radio.on::before {
    background: radial-gradient(circle, #4a9cf0 0 3.500px, #fff 4px);
}

.radio.second {
    margin: 0 3px 0 13px;
}

.line-kind {
    width: 37px;
    margin-right: 1px;
    flex: none;
}

.edit-bar .caret {
    margin-right: 1px;
}

.canvas {
    flex: 1;
    min-height: 0;
    position: relative;
    background: #000;
    overflow: hidden;
}

.rebar-info {
    position: absolute;
    left: 3px;
    top: 4px;
    width: 207px;
    height: 38px;
    display: flex;
    align-items: center;
    gap: 7px;
    padding-left: 8px;
    background: #e0e7ea;
    z-index: 1;
    white-space: nowrap;
}

.combo.info {
    width: 135px;
    height: 26px;
    padding-left: 6px;
    border-color: #a0a0a0;
}

.drawing {
    display: block;
    width: 732px;
    height: 711px;
}

.grid {
    fill: none;
    stroke: #3e4250;
    stroke-width: 1;
    stroke-dasharray: 9 3;
}

.ticks {
    fill: none;
    stroke: #3e4250;
}

.grid-labels text {
    font-family: Roboto, "Liberation Sans", sans-serif;
    font-weight: 300;
    font-size: 13px;
    letter-spacing: -0.3px;
    fill: #565b6c;
}

.leader {
    fill: none;
    stroke: #777;
    stroke-dasharray: 3 2;
}

.outline {
    fill: none;
    stroke: #eeeeee;
    stroke-width: 2.500;
}

.hoop {
    fill: none;
    stroke: #c8191f;
    stroke-width: 3.500;
}

.hook {
    fill: none;
    stroke: #c8191f;
    stroke-width: 3;
}

.inner {
    fill: none;
    stroke: #bfe0ff;
    stroke-dasharray: 4 2.500;
}

.bar-corner circle {
    fill: #000;
    fill-opacity: 0.4;
    stroke: #f7d820;
    stroke-width: 1.200;
}

.bar-side circle {
    fill: #000;
    fill-opacity: 0.4;
    stroke: #ee18e6;
    stroke-width: 1.200;
}

.dim {
    fill: none;
    stroke: #1fe01f;
}

.dim-labels text {
    font-family: Roboto, "Liberation Sans", sans-serif;
    font-weight: 300;
    font-size: 17px;
    letter-spacing: -0.4px;
    fill: #fff;
}

.note text {
    font-family: "Noto Sans CJK SC", sans-serif;
    font-size: 15px;
    fill: #fff;
}

.pointer {
    position: absolute;
    left: 75px;
    top: 375px;
}
```
